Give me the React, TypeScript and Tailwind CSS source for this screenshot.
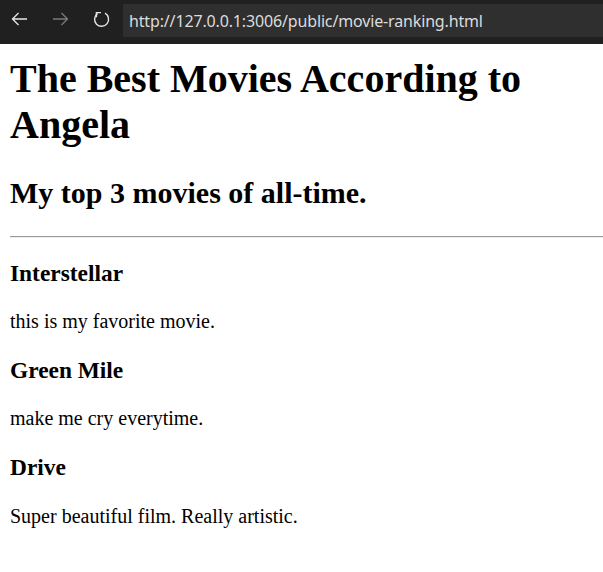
export default function App() {
  return (
    <div className="min-h-screen bg-white">
      {/* browser bar */}
      <div className="flex h-[44px] items-start bg-[#202020]">
        <div className="flex h-[38px] items-center pl-[11px]">
          <svg width="17" height="14" viewBox="0 0 17 14" fill="none" stroke="#e6e6e6" strokeWidth="1.3">
            <path d="M16 7H1.5M7.5 1L1.5 7l6 6" />
          </svg>
          <svg className="ml-[24px]" width="17" height="14" viewBox="0 0 17 14" fill="none" stroke="#7a7a7a" strokeWidth="1.3">
            <path d="M1 7h14.5M9.5 1l6 6-6 6" />
          </svg>
          <svg className="ml-[24px]" width="17" height="18" viewBox="0 0 17 18" fill="none" stroke="#e6e6e6" strokeWidth="1.4">
            <path d="M12 3.2A7 7 0 1 1 4.5 3.6" />
            <path d="M3.4 7.2V2.6H8" />
          </svg>
        </div>
        <div className="mt-[4px] ml-[13px] flex h-[33px] flex-1 items-center bg-[#2f2f2f] pl-[6px]">
          <span className="text-[16px] tracking-[-0.15px] text-[#dcdcdc]" style={{ fontFamily: '"Noto Sans", sans-serif' }}>
            http://127.0.0.1:3006/public/movie-ranking.html
          </span>
        </div>
      </div>

      {/* page */}
      <div className="pl-[10px] pt-[12px] text-black" style={{ fontFamily: '"Liberation Serif", serif' }}>
        <h1 className="mb-[28px] text-[40px] font-bold leading-[46px]">The Best Movies According to Angela</h1>
        <h2 className="mb-[25px] text-[30px] font-bold leading-[34.5px]">My top 3 movies of all-time.</h2>
        <hr className="border-t border-b border-t-[#9a9a9a] border-b-[#eeeeee]" />
        <h3 className="mt-[22px] mb-[23.4px] text-[23.4px] font-bold leading-[27px]">Interstellar</h3>
        <p className="text-[20px] leading-[23px]">this is my favorite movie.</p>
        <h3 className="mt-[24px] mb-[23.4px] text-[23.4px] font-bold leading-[27px]">Green Mile</h3>
        <p className="text-[20px] leading-[23px]">make me cry everytime.</p>
        <h3 className="mt-[24px] mb-[23.4px] text-[23.4px] font-bold leading-[27px]">Drive</h3>
        <p className="text-[20px] leading-[23px]">Super beautiful film. Really artistic.</p>
      </div>
    </div>
  );
}
